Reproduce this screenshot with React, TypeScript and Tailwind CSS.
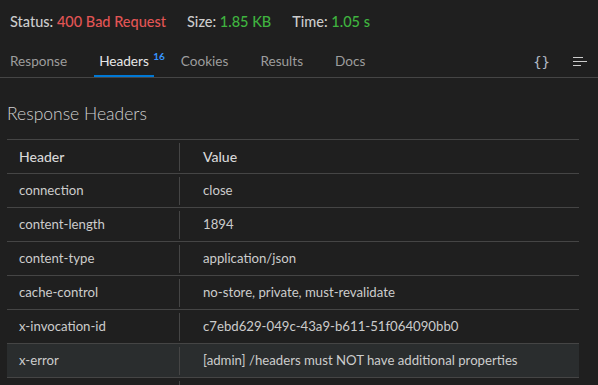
import React from 'react';

const rows = [
    { name: 'connection', value: 'close' },
    { name: 'content-length', value: '1894' },
    { name: 'content-type', value: 'application/json' },
    { name: 'cache-control', value: 'no-store, private, must-revalidate' },
    { name: 'x-invocation-id', value: 'c7ebd629-049c-43a9-b611-51f064090bb0' },
    { name: 'x-error', value: '[admin] /headers must NOT have additional properties', highlight: true },
    { name: '', value: '' },
];

const tabs = ['Response', 'Headers', 'Cookies', 'Results', 'Docs'];

const Row = ({ name, value, head, highlight }: { name: string; value: string; head?: boolean; highlight?: boolean }) => (
    <div className={`flex h-[34px] border-b border-[#454545] ${highlight ? 'bg-[#2a2d2e]' : ''}`}>
        <div className={`w-[172px] px-[12px] flex items-center ${head ? 'text-[14px] font-medium text-[#d7d7d7]' : 'text-[13.2px] text-[#cccccc]'}`}>
            {name}
        </div>
        <div className="w-px bg-[#454545] mt-[3px] mb-[2px]" />
        <div className={`flex-1 px-[23px] flex items-center ${head ? 'text-[14px] font-medium text-[#d7d7d7]' : 'text-[13.2px] text-[#cccccc]'}`}>
            {value}
        </div>
    </div>
);

const App = () => {
    return (
        <div className="w-[598px] h-[385px] overflow-hidden bg-[#1f1f1f] text-[#cccccc]" style={{ fontFamily: 'Lato, "Noto Sans", sans-serif' }}>
            {/* status */}
            <div className="h-[44px] flex items-center px-[10px] gap-[21px] text-[14.5px] font-medium">
                <span>Status: <span className="text-[#e25555]">400 Bad Request</span></span>
                <span>Size: <span className="text-[#3fb43f]">1.85 KB</span></span>
                <span>Time: <span className="text-[#3fb43f]">1.05 s</span></span>
            </div>

            {/* tabs */}
            <div className="h-[34px] flex items-stretch border-b border-[#454545] pl-[5px] pr-[10px]">
                <div className="flex gap-[22px]">
                    {tabs.map((t) => (
                        <div
                            key={t}
                            className={`relative flex items-center px-[5px] pt-[3px] text-[13.6px] ${t === 'Headers' ? 'text-[#e7e7e7] border-b-2 border-[#0078d4]' : 'text-[#9d9d9d] pb-[2px]'}`}
                        >
                            {t}
                            {t === 'Headers' && (
                                <span className="absolute left-[59px] top-[5px] text-[10px] font-bold text-[#3794ff]">16</span>
                            )}
                        </div>
                    ))}
                </div>
                <div className="ml-auto flex items-center gap-[23px] pt-[3px]">
                    <span className="text-[14px] text-[#b0b8c4]" style={{ fontFamily: '"DejaVu Sans Mono", monospace' }}>{'{}'}</span>
                    <svg width="15" height="10" viewBox="0 0 15 10">
                        <path d="M0 0.5H10M0 4.5H14M0 8.5H8" stroke="#cccccc" strokeWidth="1" />
                    </svg>
                </div>
            </div>

            {/* body */}
            <div className="px-[7px] pr-[19px]">
                <div className="pt-[24px] h-[61px] text-[17.5px] font-light text-[#d0d0d0] leading-[24px]">Response Headers</div>
                <div className="border-t border-[#454545]">
                    <Row name="Header" value="Value" head />
                    {rows.map((r, i) => (
                        <Row key={i} name={r.name} value={r.value} highlight={r.highlight} />
                    ))}
                </div>
            </div>
        </div>
    );
};

export default App;
